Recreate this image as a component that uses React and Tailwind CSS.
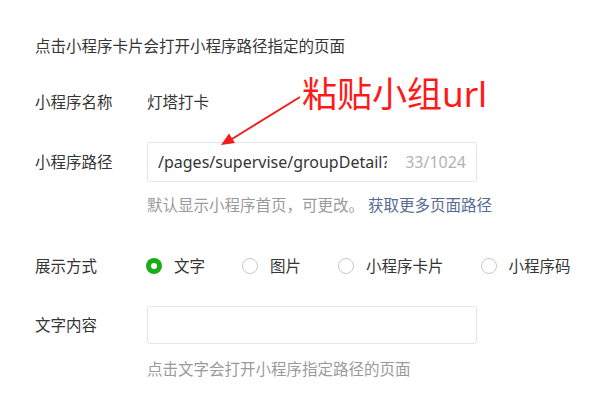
import React from "react";

const font = { fontFamily: '"Noto Sans", "Noto Sans CJK SC", sans-serif' };

function Radio({ checked, label }) {
  return (
    <div className="flex items-center gap-[12px]">
      {checked ? (
        <span className="w-[16px] h-[16px] rounded-full bg-[#1aad19] flex items-center justify-center">
          <span className="w-[6px] h-[6px] rounded-full bg-white" />
        </span>
      ) : (
        <span className="w-[16px] h-[16px] rounded-full border border-[#c9c9c9] bg-white" />
      )}
      <span className="text-[15.5px] leading-[22px] text-[#353535]">{label}</span>
    </div>
  );
}

export default function App() {
  return (
    <div
      className="relative w-[600px] h-[411px] bg-white overflow-hidden pl-[35px] pt-[35px]"
      style={font}
    >
      <div className="text-[15.5px] leading-[22px] text-[#353535]">
        点击小程序卡片会打开小程序路径指定的页面
      </div>

      <div className="mt-[34px] flex items-center text-[15.5px] leading-[22px] text-[#353535]">
        <div className="w-[112px]">小程序名称</div>
        <div>灯塔打卡</div>
      </div>

      <div className="mt-[29px] flex items-center">
        <div className="w-[112px] text-[15.5px] leading-[22px] text-[#353535]">小程序路径</div>
        <div className="w-[330px] h-[40px] border border-[#e5e5e5] rounded-[3px] flex items-center pl-[10px] pr-[10px]">
          <input
            readOnly
            value="/pages/supervise/groupDetail?id=1"
            className="w-[229px] bg-transparent outline-none text-[16px] text-[#353535]"
            style={font}
          />
          <div className="ml-auto text-[16px] text-[#b2b2b2]">33/1024</div>
        </div>
      </div>

      <div className="mt-[12px] pl-[112px] text-[15.5px] leading-[22px] text-[#9a9a9a]">
        默认显示小程序首页，可更改。 <span className="text-[#576b95]">获取更多页面路径</span>
      </div>

      <div className="mt-[39px] flex items-center">
        <div className="w-[111px] text-[15.5px] leading-[22px] text-[#353535]">展示方式</div>
        <div className="flex items-center gap-[37px]">
          <Radio checked label="文字" />
          <Radio label="图片" />
          <Radio label="小程序卡片" />
          <Radio label="小程序码" />
        </div>
      </div>

      <div className="mt-[29px] flex items-center">
        <div className="w-[112px] text-[15.5px] leading-[22px] text-[#353535]">文字内容</div>
        <div className="w-[330px] h-[38px] border border-[#e5e5e5] rounded-[3px]" />
      </div>

      <div className="mt-[14px] pl-[112px] text-[15.5px] leading-[22px] text-[#9a9a9a]">
        点击文字会打开小程序指定路径的页面
      </div>

      {/* annotation */}
      <div className="absolute left-[302px] top-[74px] text-[35px] leading-[40px] text-[#ff1a1a] whitespace-nowrap">
        粘贴小组url
      </div>
      <svg className="absolute left-0 top-0" width="600" height="411" viewBox="0 0 600 411">
        <line x1="300" y1="97" x2="232" y2="139" stroke="#f01d1d" strokeWidth="2" />
        <polygon points="221,145 229,133.5 235,143" fill="#f01d1d" />
      </svg>
    </div>
  );
}
